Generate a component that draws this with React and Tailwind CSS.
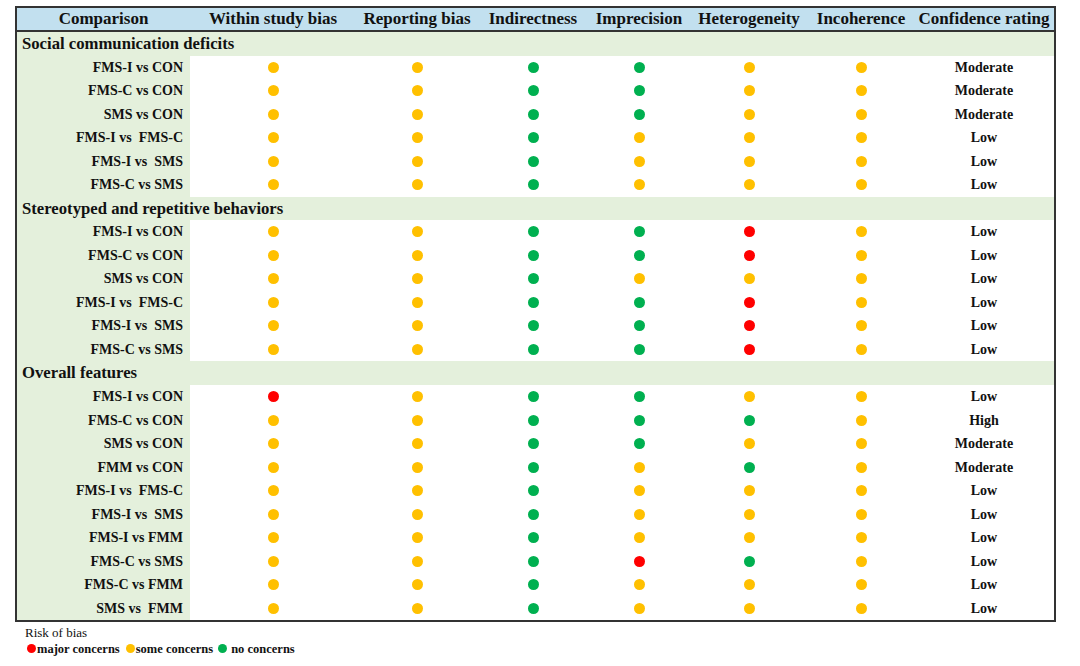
import React from "react";

const Y = "y";
const G = "g";
const R = "r";

const dotColor = {
  y: "bg-[#ffc000]",
  g: "bg-[#00b050]",
  r: "bg-[#ff0000]",
};

const headers = [
  "Comparison",
  "Within study bias",
  "Reporting bias",
  "Indirectness",
  "Imprecision",
  "Heterogeneity",
  "Incoherence",
  "Confidence rating",
];

const sections = [
  {
    title: "Social communication deficits",
    rows: [
      ["FMS-I vs CON", [Y, Y, G, G, Y, Y], "Moderate"],
      ["FMS-C vs CON", [Y, Y, G, G, Y, Y], "Moderate"],
      ["SMS vs CON", [Y, Y, G, G, Y, Y], "Moderate"],
      ["FMS-I vs  FMS-C", [Y, Y, G, Y, Y, Y], "Low"],
      ["FMS-I vs  SMS", [Y, Y, G, Y, Y, Y], "Low"],
      ["FMS-C vs SMS", [Y, Y, G, Y, Y, Y], "Low"],
    ],
  },
  {
    title: "Stereotyped and repetitive behaviors",
    rows: [
      ["FMS-I vs CON", [Y, Y, G, G, R, Y], "Low"],
      ["FMS-C vs CON", [Y, Y, G, G, R, Y], "Low"],
      ["SMS vs CON", [Y, Y, G, Y, Y, Y], "Low"],
      ["FMS-I vs  FMS-C", [Y, Y, G, G, R, Y], "Low"],
      ["FMS-I vs  SMS", [Y, Y, G, G, R, Y], "Low"],
      ["FMS-C vs SMS", [Y, Y, G, G, R, Y], "Low"],
    ],
  },
  {
    title: "Overall features",
    rows: [
      ["FMS-I vs CON", [R, Y, G, G, Y, Y], "Low"],
      ["FMS-C vs CON", [Y, Y, G, G, G, Y], "High"],
      ["SMS vs CON", [Y, Y, G, G, Y, Y], "Moderate"],
      ["FMM vs CON", [Y, Y, G, Y, G, Y], "Moderate"],
      ["FMS-I vs  FMS-C", [Y, Y, G, Y, Y, Y], "Low"],
      ["FMS-I vs  SMS", [Y, Y, G, Y, Y, Y], "Low"],
      ["FMS-I vs FMM", [Y, Y, G, Y, Y, Y], "Low"],
      ["FMS-C vs SMS", [Y, Y, G, R, G, Y], "Low"],
      ["FMS-C vs FMM", [Y, Y, G, Y, Y, Y], "Low"],
      ["SMS vs  FMM", [Y, Y, G, Y, Y, Y], "Low"],
    ],
  },
];

const Dot = ({ c, size = "w-[11px] h-[11px]" }) => (
  <span className={`inline-block rounded-full ${size} ${dotColor[c]}`} />
);

const App = () => {
  return (
    <div
      className="w-[1080px] h-[666px] bg-white text-[#111] overflow-hidden pt-[6px] pl-[15px]"
      style={{ fontFamily: '"Liberation Serif", "Times New Roman", serif' }}
    >
      <div className="w-[1041px] border-2 border-[#333] grid grid-cols-[173px_166px_122px_110px_102px_118px_106px_140px]">
        {/* header */}
        {headers.map((h) => (
          <div
            key={h}
            className="h-[24px] bg-[#c2e0ef] border-b-2 border-[#333] flex items-center justify-center text-[17px] font-bold whitespace-nowrap"
          >
            {h}
          </div>
        ))}

        {sections.map((s) => (
          <React.Fragment key={s.title}>
            <div className="col-span-8 h-[23.52px] bg-[#e4f0dc] flex items-center pl-[5px] text-[16.7px] font-bold">
              {s.title}
            </div>
            {s.rows.map(([label, dots, rating], i) => (
              <React.Fragment key={s.title + i}>
                <div className="h-[23.52px] bg-[#e4f0dc] flex items-center justify-end pr-[7px] text-[14px] font-bold whitespace-pre">
                  {label}
                </div>
                {dots.map((d, j) => (
                  <div key={j} className="h-[23.52px] flex items-center justify-center">
                    <Dot c={d} />
                  </div>
                ))}
                <div className="h-[23.52px] flex items-center justify-center text-[14px] font-bold">
                  {rating}
                </div>
              </React.Fragment>
            ))}
          </React.Fragment>
        ))}
      </div>

      {/* legend */}
      <div className="mt-[3px] pl-[10px] text-[13px] leading-[16px]">
        <div>Risk of bias</div>
        <div className="flex items-center text-[12.5px] font-bold pl-[2px]">
          <Dot c="r" size="w-[9px] h-[9px]" />
          <span className="ml-[1px]">major concerns</span>
          <span className="ml-[6px]"><Dot c="y" size="w-[9px] h-[9px]" /></span>
          <span className="ml-[1px]">some concerns</span>
          <span className="ml-[5px]"><Dot c="g" size="w-[9px] h-[9px]" /></span>
          <span className="ml-[4px]">no concerns</span>
        </div>
      </div>
    </div>
  );
};

export default App;
